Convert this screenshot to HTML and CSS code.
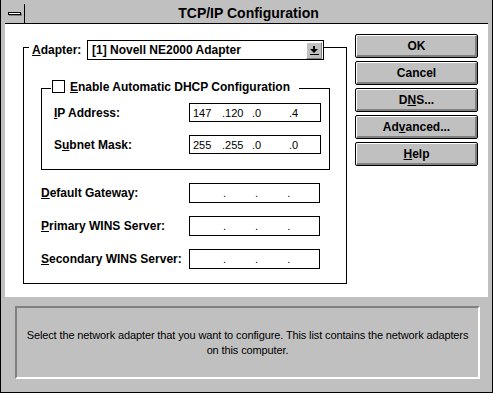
FILE: index.html
```html
<!DOCTYPE html>
<html lang="en">
<head>
  <meta charset="UTF-8" />
  <title>TCP/IP Configuration</title>
  <link rel="stylesheet" href="styles.css">
</head>
<body>
  <div class="window">
    <div class="titlebar">
      <div class="sysmenu"><span class="sysbar"></span></div>
      <div class="title">TCP/IP Configuration</div>
    </div>

    <div class="client">
      <div class="group outer">
        <div class="head adapter-head">
          <label class="adapter-label"><u>A</u>dapter:</label>
          <div class="combo">
            <span class="combo-text">[1] Novell NE2000 Adapter</span>
            <span class="drop">
              <svg width="14" height="15" viewBox="0 0 14 15">
                <rect x="6" y="3" width="2" height="3" fill="#000"/>
                <polygon points="3,6 11,6 7,10" fill="#000"/>
                <rect x="3" y="11" width="9" height="1" fill="#000"/>
              </svg>
            </span>
          </div>
        </div>

        <div class="group inner">
          <div class="head dhcp-head">
            <span class="check"></span>
            <span><u>E</u>nable Automatic DHCP Configuration</span>
          </div>
          <div class="rows inner-rows">
            <label><u>I</u>P Address:</label>
            <div class="ip wide">
              <span class="s1">147</span><span class="s2">.120</span><span class="s3">.0</span><span>.4</span>
            </div>
            <label>S<u>u</u>bnet Mask:</label>
            <div class="ip wide">
              <span class="s1">255</span><span class="s2">.255</span><span class="s3">.0</span><span>.0</span>
            </div>
          </div>
        </div>

        <div class="rows outer-rows">
          <label><u>D</u>efault Gateway:</label>
          <div class="ip empty"><span>.</span><span>.</span><span>.</span></div>
          <label><u>P</u>rimary WINS Server:</label>
          <div class="ip empty"><span>.</span><span>.</span><span>.</span></div>
          <label><u>S</u>econdary WINS Server:</label>
          <div class="ip empty"><span>.</span><span>.</span><span>.</span></div>
        </div>
      </div>

      <div class="buttons">
        <button>OK</button>
        <button>Cancel</button>
        <button>D<u>N</u>S...</button>
        <button>Ad<u>v</u>anced...</button>
        <button><u>H</u>elp</button>
      </div>
    </div>

    <div class="status">
      <div class="inset">Select the network adapter that you want to configure. This list contains the network adapters on this computer.</div>
    </div>
  </div>
</body>
</html>
```

FILE: styles.css
```css
body {
  margin: 0;
  font-family: "Liberation Sans", Arial, sans-serif;
  background: #c0c0c0;
}

.window {
  width: 493px;
  height: 393px;
  box-sizing: border-box;
  background: #c0c0c0;
  border-left: 1px solid #000;
  border-right: 1px solid #000;
  border-bottom: 1px solid #000;
  padding: 4px 4px 0 4px;
  display: flex;
  flex-direction: column;
}

/* title bar */
.titlebar {
  height: 19px;
  border-bottom: 1px solid #000;
  display: flex;
}

.sysmenu {
  width: 19px;
  border-right: 1px solid #000;
  display: flex;
  align-items: center;
  justify-content: center;
}

.sysbar {
  width: 11px;
  height: 1px;
  background: #fff;
  border: 1px solid #000;
  box-shadow: 1px 1px 0 #808080;
}

.title {
  flex: 1;
  text-align: center;
  font-weight: bold;
  font-size: 14px;
  line-height: 19px;
  padding-right: 16px;
}

/* white client area */
.client {
  height: 273px;
  background: #fff;
  display: flex;
  align-items: flex-start;
  padding-left: 18px;
  font-size: 12px;
  font-weight: bold;
}

.group {
  border: 1px solid #000;
}

.group.outer {
  width: 322px;
  margin-top: 23px;
  padding: 0 0 14px 0;
}

.head {
  display: flex;
  align-items: center;
  background: #fff;
  width: fit-content;
}

.adapter-head {
  margin: -8px 0 0 5px;
  padding-left: 3px;
  height: 20px;
}

.adapter-label {
  width: 55px;
}

.combo {
  height: 18px;
  border: 1px solid #000;
  display: flex;
  align-items: center;
  justify-content: space-between;
  padding-left: 4px;
  width: 231px;
}

.drop {
  width: 14px;
  height: 15px;
  margin-right: 1px;
  background: #c0c0c0;
  border-top: 1px solid #fff;
  border-left: 1px solid #fff;
  border-right: 1px solid #808080;
  border-bottom: 1px solid #808080;
  display: flex;
}

.group.inner {
  width: 287px;
  margin: 28px 0 0 17px;
  padding-bottom: 15px;
}

.dhcp-head {
  margin: -9px 0 0 9px;
  padding: 0 9px 0 1px;
  height: 13px;
  gap: 5px;
}

.check {
  width: 11px;
  height: 11px;
  border: 1px solid #000;
  background: #fff;
}

.rows {
  display: grid;
  align-items: center;
}

.inner-rows {
  margin-top: 10px;
  padding-left: 12px;
  grid-template-columns: 135px 132px;
  row-gap: 13px;
}

.outer-rows {
  margin-top: 13px;
  padding-left: 17px;
  grid-template-columns: 148px 131px;
  row-gap: 13px;
}

.ip {
  box-sizing: border-box;
  border: 1px solid #000;
  display: flex;
  align-items: center;
  font-weight: normal;
  font-size: 11px;
}

.ip.wide {
  height: 19px;
  padding-left: 3px;
}

.ip.wide .s1 { width: 29px; }
.ip.wide .s2 { width: 30px; }
.ip.wide .s3 { width: 37px; }

.ip.empty {
  height: 20px;
  padding-left: 33px;
  gap: 29px;
}

/* push buttons */
.buttons {
  margin: 10px 0 0 8px;
  display: flex;
  flex-direction: column;
  gap: 3px;
}

.buttons button {
  width: 123px;
  height: 24px;
  font-family: inherit;
  font-size: 12px;
  font-weight: bold;
  color: #000;
  background: #c0c0c0;
  border: 1px solid #000;
  border-radius: 2px;
  box-shadow: inset 1px 1px 0 #fff, inset -2px -2px 0 #808080;
  padding: 0;
}

/* help text panel */
.status {
  flex: 1;
  padding: 9px 8px 0 10px;
}

.inset {
  height: 69px;
  border-top: 2px solid #808080;
  border-left: 2px solid #808080;
  border-right: 2px solid #fff;
  border-bottom: 2px solid #fff;
  display: flex;
  align-items: center;
  justify-content: center;
  text-align: center;
  font-size: 11px;
  letter-spacing: -0.12px;
  line-height: 15px;
  padding: 0 5px;
}
```
